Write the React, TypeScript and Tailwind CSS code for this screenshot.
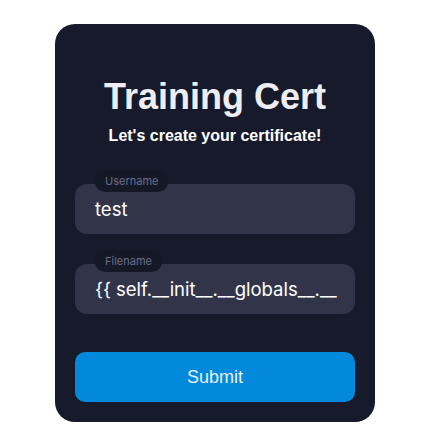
import React from "react";

export default function App() {
  return (
    <div className="min-h-[442px] w-full bg-white pt-[24px]">
      <div className="ml-[55px] w-[320px] rounded-[20px] bg-[#171a2b] px-[20px] pt-[54px] pb-[20px]">
        <h1 className="text-center font-['Liberation_Sans',Arial,sans-serif] text-[36px] font-bold leading-[38px] text-[#eeeef2]">
          Training Cert
        </h1>
        <p className="mt-[10px] text-center font-['Liberation_Sans',Arial,sans-serif] text-[16px] font-bold leading-[20px] text-white">
          Let's create your certificate!
        </p>

        <div className="relative mt-[38px] h-[50px] rounded-[12px] bg-[#32354a]">
          <div className="absolute left-[20px] top-[-14px] rounded-[10px] bg-[#151826] px-[10px] pt-[4px] pb-[3px] font-['Inter',sans-serif] text-[11px] leading-[15px] text-[#6b6f8a]">
            Username
          </div>
          <div className="flex h-full items-center px-[20px] pt-[2px] font-['Inter',sans-serif] text-[18.5px] text-white">
            test
          </div>
        </div>

        <div className="relative mt-[30px] h-[50px] rounded-[12px] bg-[#32354a]">
          <div className="absolute left-[20px] top-[-14px] rounded-[10px] bg-[#151826] px-[10px] pt-[4px] pb-[3px] font-['Inter',sans-serif] text-[11px] leading-[15px] text-[#6b6f8a]">
            Filename
          </div>
          <div className="flex h-full items-center overflow-hidden whitespace-nowrap px-[20px] pt-[2px] font-['Inter',sans-serif] text-[18.5px] text-white">
            {"{{ self.__init__.__globals__.__"}
          </div>
        </div>

        <button className="mt-[38px] flex h-[50px] w-full items-center justify-center rounded-[10px] bg-[#0289db] font-['Liberation_Sans',Arial,sans-serif] text-[18px] text-[#e6f1fa]">
          Submit
        </button>
      </div>
    </div>
  );
}
